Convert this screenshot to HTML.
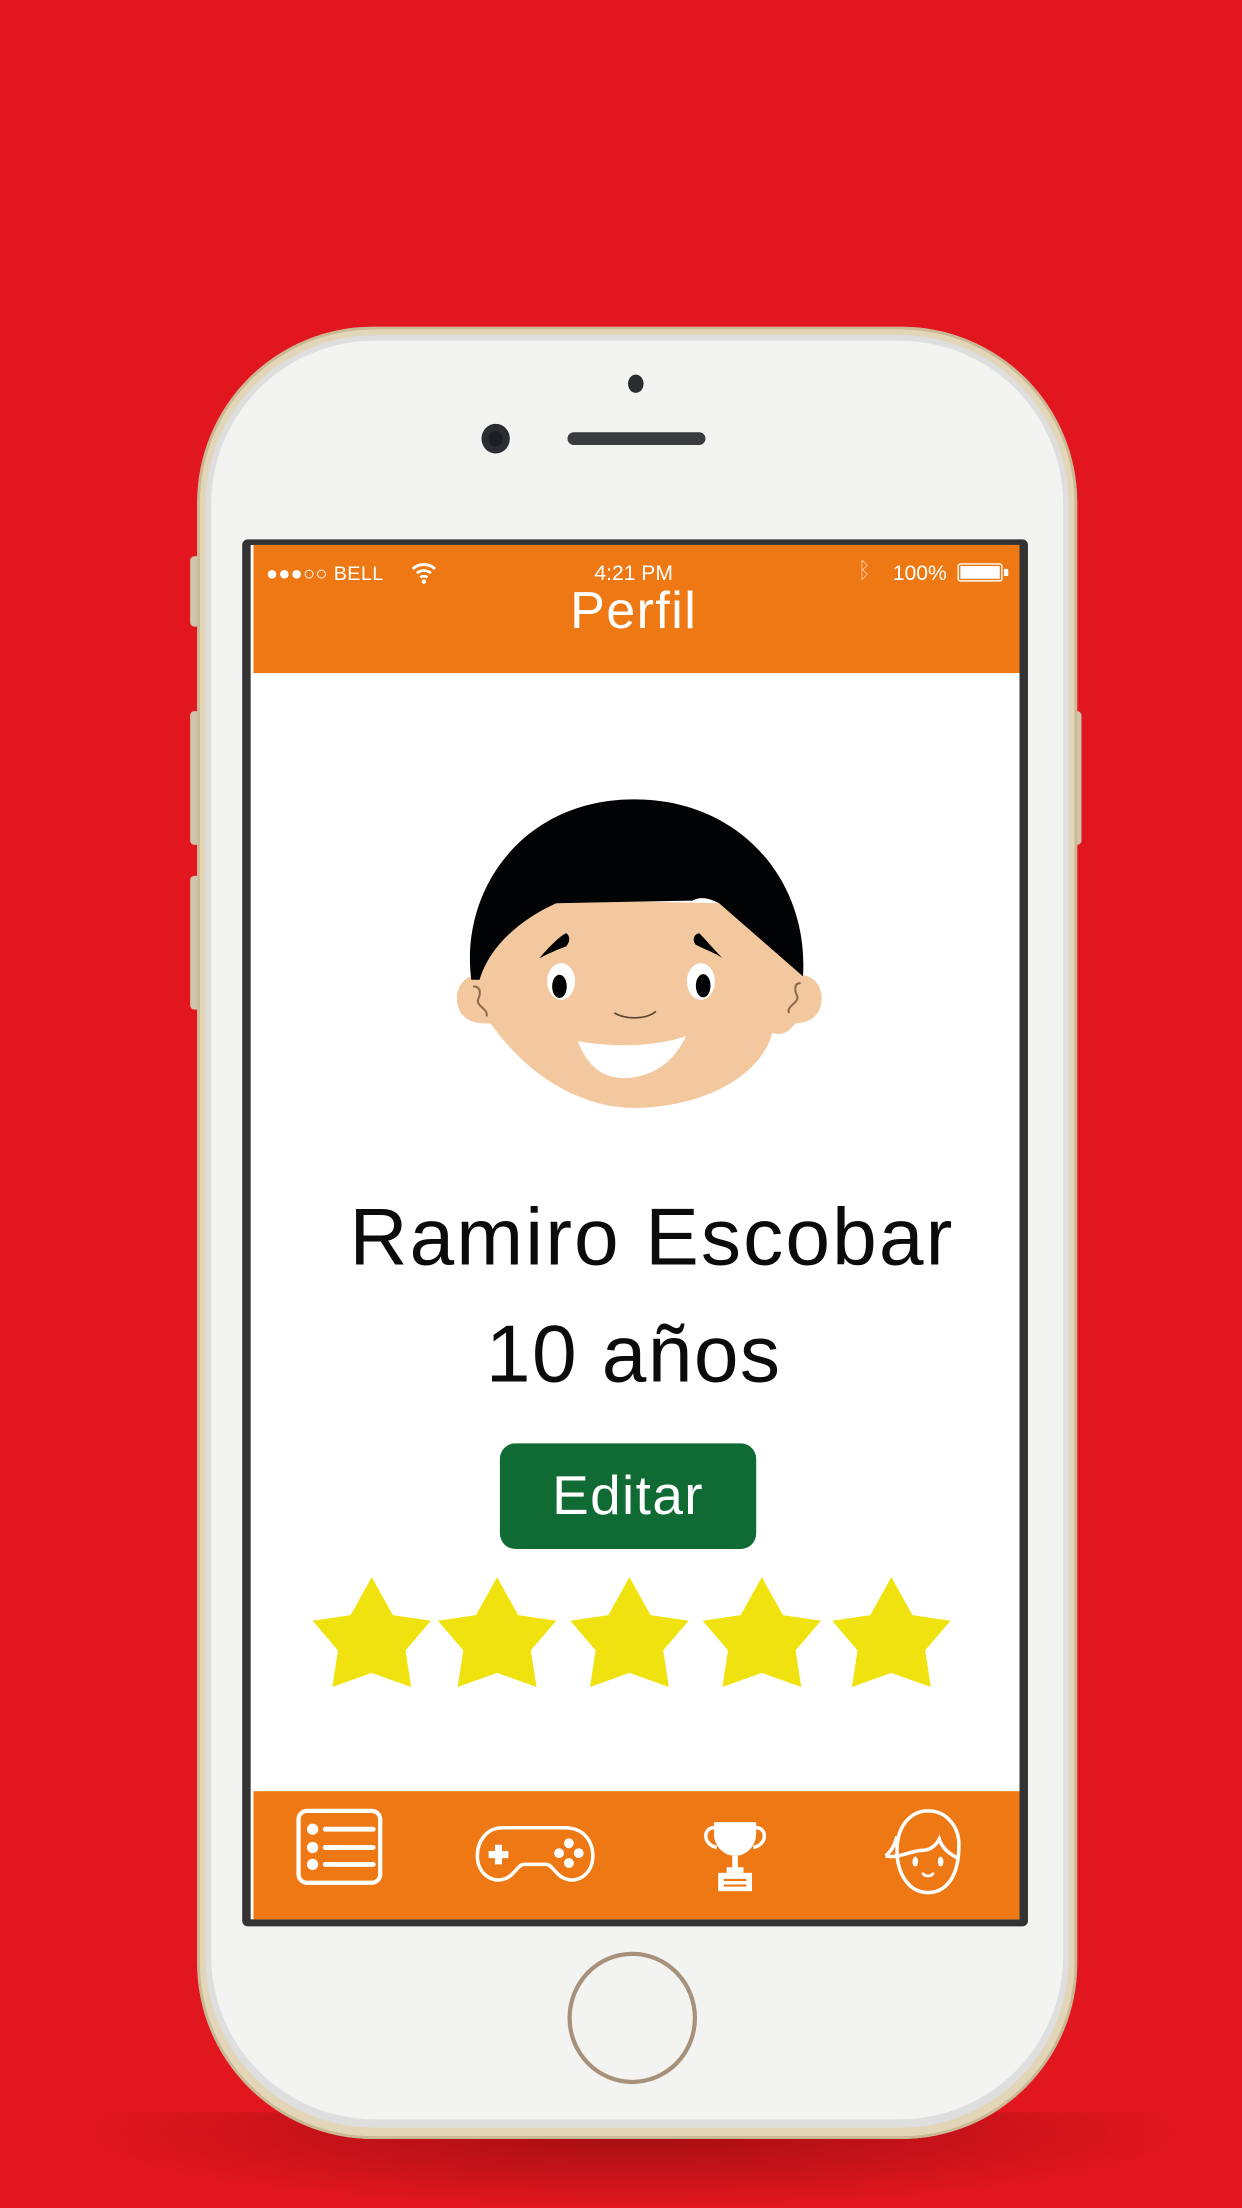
<!DOCTYPE html>
<html><head><meta charset="utf-8"><style>
html,body{margin:0;padding:0;width:1242px;height:2208px;overflow:hidden;background:#e1161f;}
#w{position:absolute;left:0;top:0;width:882px;height:1568px;transform:scale(1.408163);transform-origin:0 0;font-family:"Liberation Sans",sans-serif;}
.a{position:absolute;}
</style></head><body><div id="w">
<div class="a" style="left:60px;top:1500px;width:780px;height:68px;background:radial-gradient(ellipse at 50% 20%,rgba(120,10,10,.6),rgba(200,20,25,0) 70%);"></div>
<div class="a" style="left:135px;top:395px;width:8px;height:50px;background:#cfc3ab;border-radius:3px"></div>
<div class="a" style="left:135px;top:505px;width:8px;height:95px;background:#cfc3ab;border-radius:3px"></div>
<div class="a" style="left:135px;top:622px;width:8px;height:95px;background:#cfc3ab;border-radius:3px"></div>
<div class="a" style="left:761px;top:505px;width:7px;height:95px;background:#cfc3ab;border-radius:3px"></div>
<div class="a" style="left:140px;top:232px;width:625px;height:1287px;border-radius:125px;background:#e3d5b8;box-shadow:inset 0 0 0 2px #c9b994"></div>
<div class="a" style="left:146px;top:238px;width:613px;height:1273px;border-radius:120px;background:#dedede"></div>
<div class="a" style="left:150px;top:242px;width:605px;height:1263px;border-radius:116px;background:#f3f3f2"></div>
<div class="a" style="left:446px;top:266px;width:11px;height:13px;border-radius:50%;background:#2a2c30"></div>
<div class="a" style="left:342px;top:301px;width:20px;height:21px;border-radius:50%;background:#1c1e24;box-shadow:inset 0 0 0 5px #2b2d33"></div>
<div class="a" style="left:403px;top:307px;width:98px;height:9px;border-radius:5px;background:#3a3b3d"></div>
<div class="a" style="left:403px;top:1386px;width:92px;height:94px;border-radius:50%;border:3px solid #a7917a;box-sizing:border-box"></div>
<div class="a" style="left:172px;top:383px;width:558px;height:985px;background:#333;border-radius:4px"></div>
<div class="a" style="left:178px;top:387px;width:546px;height:976px;background:#fff"></div>
<div class="a" style="left:180px;top:387px;width:544px;height:91px;background:#ee7914"></div>
<div class="a" style="left:180px;top:1272px;width:544px;height:91px;background:#ee7914"></div>
<div class="a" style="left:189px;top:399px;color:#fff;font-size:14px;letter-spacing:.3px">●●●○○ BELL</div>
<svg class="a" style="left:291px;top:399px" width="20" height="16" viewBox="0 0 20 16"><path d="M2 5a12 12 0 0 1 16 0M5 8a8 8 0 0 1 10 0M7.5 11a4 4 0 0 1 5 0" stroke="#fff" stroke-width="2" fill="none"/><circle cx="10" cy="14" r="1.6" fill="#fff"/></svg>
<div class="a" style="left:380px;top:399px;width:140px;text-align:center;color:#fff;font-size:15px">4:21 PM</div>
<div class="a" style="left:609px;top:397px;color:#f8c49a;font-size:16px">ᛒ</div>
<div class="a" style="left:634px;top:399px;color:#fff;font-size:15px">100%</div>
<div class="a" style="left:680px;top:400px;width:32px;height:13px;border:1.5px solid #fff;box-sizing:border-box;border-radius:2px;padding:1px"><div style="background:#fff;width:100%;height:100%"></div></div>
<div class="a" style="left:713px;top:404px;width:3px;height:5px;background:#fff"></div>
<div class="a" style="left:350px;top:412px;width:200px;text-align:center;color:#fff;font-size:37px;line-height:44px;letter-spacing:1px">Perfil</div>
<svg class="a" style="left:312px;top:554px" width="284" height="241" viewBox="0 0 1200 1020">
<path d="M150 590 C80 570 40 620 55 680 C70 730 120 735 170 730 Z" fill="#f3c89f"/>
<path d="M1050 590 C1120 570 1160 620 1145 680 C1130 730 1080 735 1030 730 Z" fill="#f3c89f"/>
<path d="M110 600 C120 470 240 380 400 360 L840 370 C960 420 1070 520 1095 600 C1100 700 1060 780 1000 760 C960 900 780 980 600 985 C420 990 260 880 160 740 C120 700 100 650 110 600 Z" fill="#f3c89f"/>
<path d="M95 600 C60 330 250 60 580 58 C900 55 1110 300 1092 590 L840 370 C800 350 780 352 760 362 L350 370 C240 420 150 500 120 600 Z" fill="#020304"/>
<path d="M100 620 C130 620 120 650 115 660 C110 680 150 690 140 710" stroke="#8b6a4c" stroke-width="6" fill="none"/>
<path d="M1085 610 C1060 610 1070 640 1075 650 C1080 670 1040 680 1050 700" stroke="#8b6a4c" stroke-width="6" fill="none"/>
<path d="M300 535 C330 500 360 470 380 460 C395 470 390 490 380 500 C350 510 320 525 300 535Z" fill="#020304"/>
<path d="M850 535 C820 505 800 480 780 460 C760 465 760 485 770 495 C800 510 830 520 850 535Z" fill="#020304"/>
<ellipse cx="365" cy="605" rx="42" ry="55" fill="#fff"/><ellipse cx="360" cy="620" rx="22" ry="35" fill="#020304"/>
<ellipse cx="785" cy="605" rx="42" ry="55" fill="#fff"/><ellipse cx="792" cy="618" rx="22" ry="35" fill="#020304"/>
<path d="M525 700 C560 720 620 720 650 695" stroke="#5a4633" stroke-width="5" fill="none"/>
<path d="M415 785 C530 805 650 800 740 770 C700 860 620 900 540 895 C480 890 440 850 415 785Z" fill="#fff"/>
</svg>
<div class="a" style="left:213px;top:844px;width:500px;text-align:center;font-size:57px;color:#0b0b0b;line-height:70px;letter-spacing:1.5px;white-space:nowrap">Ramiro Escobar</div>
<div class="a" style="left:200px;top:927px;width:500px;text-align:center;font-size:57px;color:#0b0b0b;line-height:70px;letter-spacing:1px">10 años</div>
<div class="a" style="left:355px;top:1025px;width:182px;height:75px;background:#0f6b33;border-radius:11px;color:#fff;font-size:39px;line-height:75px;text-align:center;letter-spacing:1px">Editar</div>
<svg class="a" style="left:215px;top:1114px" width="470" height="90" viewBox="0 0 470 90">
<defs><polygon id="s" points="0,-38 15,-11 42,-7 24,14 28,40 0,30 -28,40 -24,14 -42,-7 -15,-11" fill="#efe20f"/></defs>
<use href="#s" x="49" y="44"/><use href="#s" x="138" y="44"/><use href="#s" x="232" y="44"/><use href="#s" x="326" y="44"/><use href="#s" x="418" y="44"/>
</svg>
<svg class="a" style="left:205px;top:1282px" width="500" height="72" viewBox="0 0 500 72" fill="none" stroke="#fff">
<rect x="7" y="4" width="58" height="51" rx="6" stroke-width="3"/>
<circle cx="17" cy="17" r="4" fill="#fff" stroke="none"/><circle cx="17" cy="30" r="4" fill="#fff" stroke="none"/><circle cx="17" cy="42" r="4" fill="#fff" stroke="none"/>
<path d="M26 17h34M26 30h34M26 42h34" stroke-width="3.5" stroke-linecap="round"/>
<path d="M152 16 h44 c14 0 20 10 20 20 c0 12 -10 20 -20 16 c-6 -2 -9 -10 -13 -10 h-16 c-4 0 -7 8 -13 10 c-10 4 -20 -4 -20 -16 c0 -10 6 -20 18 -20z" stroke-width="2.5"/>
<path d="M149 28v14M142 35h14" stroke-width="5"/>
<circle cx="199" cy="27" r="3" fill="#fff"/><circle cx="199" cy="41" r="3" fill="#fff"/><circle cx="192" cy="34" r="3" fill="#fff"/><circle cx="206" cy="34" r="3" fill="#fff"/>
<path d="M302 12h30v8c0 10 -8 16 -15 16c-7 0 -15 -6 -15 -16z" fill="#fff" stroke="none"/>
<path d="M302 16c-8 0 -8 12 2 14M332 16c8 0 8 12 -2 14" stroke-width="2.5"/>
<path d="M317 36v10M311 46h12" stroke-width="4"/>
<rect x="305" y="48" width="24" height="13" fill="#fff" stroke="none"/><path d="M309 53h16M309 57h16" stroke="#ee7914" stroke-width="1.5"/>
<path d="M432 32 c0 -20 12 -28 22 -28 c14 0 22 12 22 24 c0 24 -10 34 -22 34 c-14 0 -22 -14 -22 -30z" stroke-width="2.5"/>
<path d="M424 36 c6 -6 6 -8 8 -14 M424 36 c10 2 18 -4 26 -4 c6 0 10 -4 12 -8 c2 6 6 10 14 14" stroke-width="2.5"/>
<ellipse cx="445" cy="40" rx="2" ry="3.5" fill="#fff" stroke="none"/><ellipse cx="463" cy="40" rx="2" ry="3.5" fill="#fff" stroke="none"/>
<path d="M450 48c2 3 6 3 8 0" stroke-width="2"/>
</svg>
</div></body></html>
